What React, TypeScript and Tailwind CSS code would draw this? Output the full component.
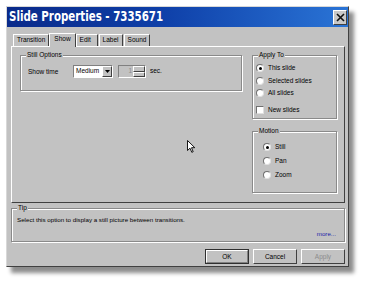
import React from "react";

const font = { fontFamily: '"Liberation Sans", Arial, sans-serif' };

function Sunken({ className = "", children }: { className?: string; children?: React.ReactNode }) {
  return (
    <div className={`border border-t-[#808080] border-l-[#808080] border-r-white border-b-white ${className}`}>
      {children}
    </div>
  );
}

function Group({ label, className = "", children }: { label: string; className?: string; children?: React.ReactNode }) {
  return (
    <div className={`relative border border-[#8a8a8a] shadow-[1px_1px_0_#fff,inset_1px_1px_0_#fff] ${className}`}>
      <span className="absolute -top-[5px] left-[5px] bg-[#c2c2c2] px-[1px] text-[6.5px] leading-[8px] text-black">{label}</span>
      {children}
    </div>
  );
}

function Radio({ checked, label }: { checked?: boolean; label: string }) {
  return (
    <div className="flex items-center gap-[4px] h-[8px]">
      <span className="relative w-[8px] h-[8px] rounded-full bg-white border border-t-[#707070] border-l-[#707070] border-r-[#e0e0e0] border-b-[#e0e0e0] flex items-center justify-center">
        {checked && <span className="w-[3px] h-[3px] rounded-full bg-black" />}
      </span>
      <span className="text-[6.5px] leading-[8px] text-black">{label}</span>
    </div>
  );
}

function Btn({ label, def, disabled }: { label: string; def?: boolean; disabled?: boolean }) {
  return (
    <div
      className={`w-[44px] h-[15px] flex items-center justify-center text-[6.5px] bg-[#c2c2c2] ${
        def ? "border border-[#303030]" : "border border-t-white border-l-white border-r-[#404040] border-b-[#404040]"
      } ${disabled ? "text-[#8c8c8c]" : "text-black"}`}
    >
      <div className={def ? "w-full h-full flex items-center justify-center border border-t-white border-l-white border-r-[#808080] border-b-[#808080]" : ""}>
        {label}
      </div>
    </div>
  );
}

export default function App() {
  return (
    <div className="w-[365px] h-[282px] bg-white relative overflow-hidden" style={font}>
      <div className="absolute left-[6px] top-[6px] w-[343px] h-[261px] bg-[#c2c2c2] border border-t-[#d8d8d8] border-l-[#d8d8d8] border-r-[#404040] border-b-[#404040] shadow-[5px_6px_4px_rgba(0,0,0,0.45)] flex flex-col">
        {/* Title bar */}
        <div className="h-[20px] flex items-center justify-between pl-[2px] pr-[1px] bg-[linear-gradient(90deg,#0a2a8a_0%,#0e3fa8_45%,#2a74d6_100%)]">
          <span
            className="inline-block text-white font-bold leading-none origin-left scale-x-[0.76] whitespace-nowrap"
            style={{ fontFamily: '"DejaVu Sans", Verdana, sans-serif', fontSize: "13.5px" }}
          >
            Slide Properties - 7335671
          </span>
          <div className="w-[14px] h-[15px] bg-[#c8c8c8] border border-t-white border-l-white border-r-[#404040] border-b-[#404040] flex items-center justify-center">
            <svg width="9" height="9" viewBox="0 0 9 9">
              <path d="M1 1 L8 8 M8 1 L1 8" stroke="#111" strokeWidth="1.6" />
            </svg>
          </div>
        </div>

        {/* Tabs */}
        <div className="mt-[6px] ml-[6px] flex items-end h-[13px] text-[6.5px] leading-none text-black relative z-10">
          <div className="h-[12px] px-[3px] flex items-center border border-b-0 border-t-white border-l-white border-r-[#404040]">Transition</div>
          <div className="h-[14px] -mb-[1px] px-[4px] flex items-start pt-[2px] bg-[#c2c2c2] border border-b-0 border-t-white border-l-white border-r-[#404040]">Show</div>
          <div className="h-[12px] w-[22px] px-[3px] flex items-center border border-b-0 border-t-white border-l-white border-r-[#404040]">Edit</div>
          <div className="h-[12px] w-[24px] ml-[1px] px-[3px] flex items-center border border-b-0 border-t-white border-l-white border-r-[#404040]">Label</div>
          <div className="h-[12px] px-[3px] ml-[1px] flex items-center border border-b-0 border-t-white border-l-white border-r-[#404040]">Sound</div>
        </div>

        {/* Tab panel */}
        <div className="ml-[4px] w-[334px] h-[157px] border border-t-white border-l-white border-r-[#404040] border-b-[#404040] flex pt-[8px] pl-[8px] gap-[10px]">
          <Group label="Still Options" className="w-[222px] h-[36px]">
            <div className="flex items-center pt-[9px] pl-[7px] text-[6.5px] text-black">
              <span className="w-[45px]">Show time</span>
              <Sunken className="w-[40px] h-[13px] bg-white flex items-center justify-between">
                <span className="pl-[2px] leading-none">Medium</span>
                <div className="w-[10px] h-[11px] bg-[#c2c2c2] border border-t-white border-l-white border-r-[#404040] border-b-[#404040] flex items-center justify-center">
                  <svg width="5" height="3" viewBox="0 0 5 3"><path d="M0 0 H5 L2.5 3 Z" fill="#000" /></svg>
                </div>
              </Sunken>
              <Sunken className="ml-[5px] w-[28px] h-[13px] bg-[#c2c2c2] flex items-center justify-between">
                <span className="ml-auto mr-[1px] text-[#8c8c8c] leading-none">1</span>
                <div className="w-[12px] h-[11px] flex flex-col">
                  <div className="h-[5.5px] border border-t-white border-l-white border-r-[#404040] border-b-[#404040] bg-[#c2c2c2]" />
                  <div className="h-[5.5px] border border-t-white border-l-white border-r-[#404040] border-b-[#404040] bg-[#c2c2c2]" />
                </div>
              </Sunken>
              <span className="ml-[4px] leading-none">sec.</span>
            </div>
          </Group>

          <div className="flex flex-col gap-[12px]">
            <Group label="Apply To" className="w-[85px] h-[64px]">
              <div className="flex flex-col gap-[4.5px] pt-[8px] pl-[3px]">
                <Radio checked label="This slide" />
                <Radio label="Selected slides" />
                <Radio label="All slides" />
                <div className="flex items-center gap-[4px] h-[8px] mt-[4px]">
                  <span className="w-[8px] h-[8px] bg-white border border-t-[#707070] border-l-[#707070] border-r-[#e0e0e0] border-b-[#e0e0e0]" />
                  <span className="text-[6.5px] leading-[8px] text-black">New slides</span>
                </div>
              </div>
            </Group>
            <Group label="Motion" className="w-[85px] h-[62px]">
              <div className="flex flex-col gap-[6px] pt-[11px] pl-[10px]">
                <Radio checked label="Still" />
                <Radio label="Pan" />
                <Radio label="Zoom" />
              </div>
            </Group>
          </div>
        </div>

        {/* Tip */}
        <Group label="Tip" className="ml-[4px] mt-[5px] w-[334px] h-[34px]">
          <div className="pt-[7px] pl-[5px] text-[6.2px] leading-[8px] text-black">
            Select this option to display a still picture between transitions.
          </div>
          <div className="absolute right-[8px] bottom-[3px] text-[6.2px] leading-[8px] text-[#1a1aa8]">more...</div>
        </Group>

        {/* Buttons */}
        <div className="mt-[7px] pr-[3px] flex justify-end gap-[4px]">
          <Btn label="OK" def />
          <Btn label="Cancel" />
          <Btn label="Apply" disabled />
        </div>
      </div>

      {/* Mouse cursor */}
      <svg className="absolute left-[187px] top-[140px]" width="9" height="14" viewBox="0 0 9 14">
        <path d="M0.5 0.5 L0.5 10.5 L3 8.2 L4.8 12.3 L6.2 11.7 L4.5 7.7 L7.8 7.7 Z" fill="#fff" stroke="#000" strokeWidth="0.9" />
      </svg>
    </div>
  );
}
